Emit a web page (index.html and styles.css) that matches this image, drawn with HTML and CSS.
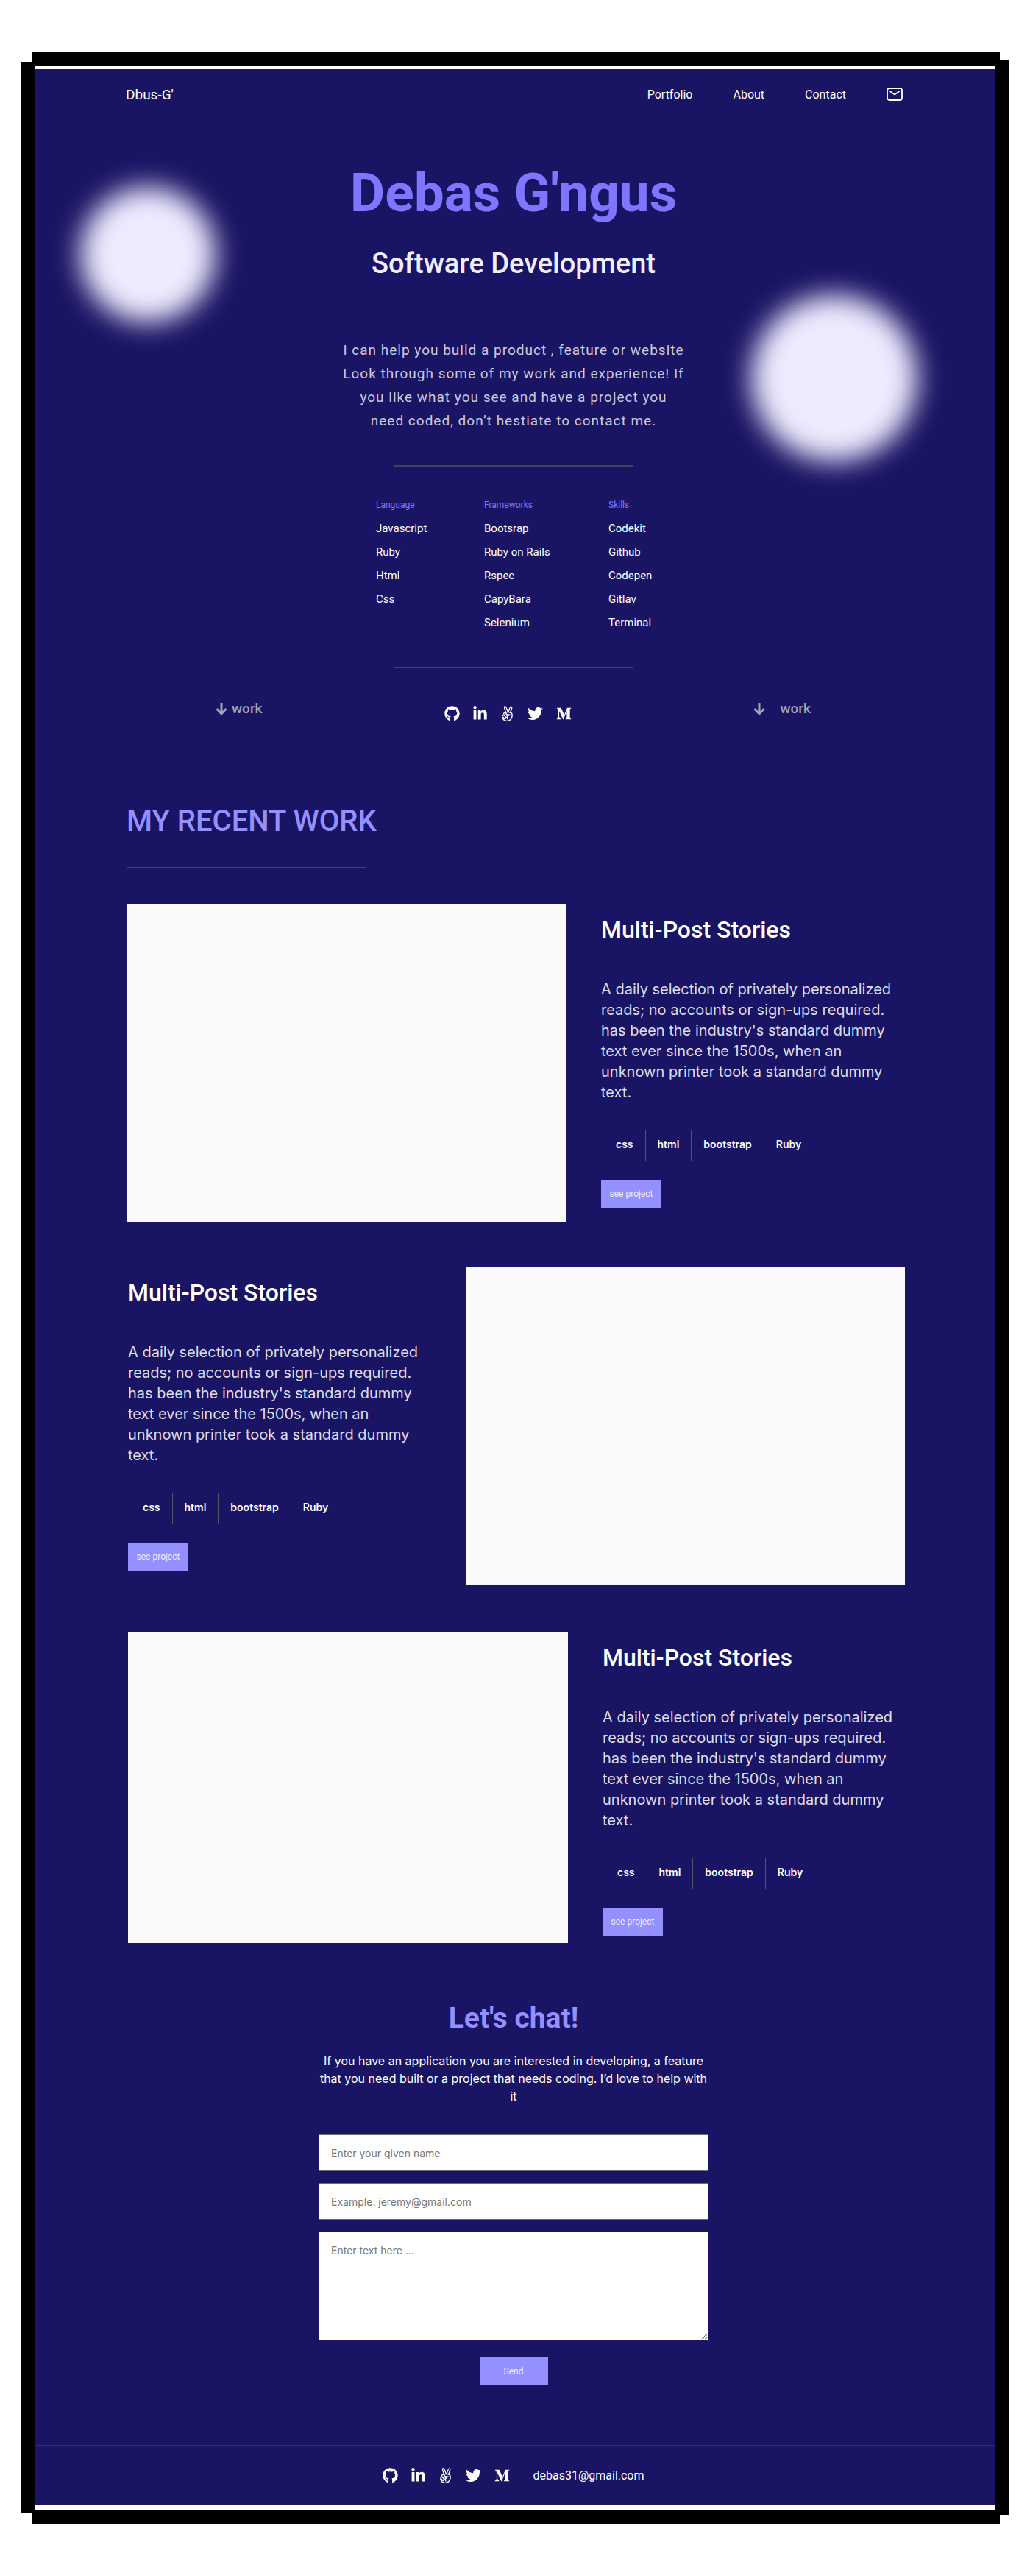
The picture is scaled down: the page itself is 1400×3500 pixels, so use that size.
FILE: index.html
```html
<!DOCTYPE html>
<html lang="en">
<head>
<meta charset="utf-8">
<meta name="viewport" content="width=device-width, initial-scale=1">
<title>Dbus-G' | Software Development</title>
<link rel="stylesheet" href="styles.css">
</head>
<body>
<svg class="sprite" aria-hidden="true">
  <symbol id="i-github" viewBox="0 0 496 512"><path d="M165.900 397.400c0 2-2.300 3.600-5.200 3.600-3.300.3-5.600-1.300-5.600-3.600 0-2 2.300-3.600 5.200-3.600 3-.3 5.600 1.300 5.600 3.600zM244.800 8C106.100 8 0 113.300 0 252c0 110.900 69.800 205.800 169.500 239.200 12.800 2.300 17.300-5.600 17.300-12.100 0-6.200-.3-40.400-.3-61.400 0 0-70 15-84.700-29.800 0 0-11.400-29.100-27.800-36.600 0 0-22.900-15.700 1.600-15.400 0 0 24.900 2 38.600 25.800 21.900 38.600 58.600 27.500 72.900 20.900 2.300-16 8.800-27.100 16-33.700-55.900-6.200-112.300-14.300-112.300-110.500 0-27.500 7.600-41.300 23.600-58.900-2.600-6.500-11.100-33.300 2.600-67.900 20.900-6.500 69 27 69 27 20-5.600 41.500-8.500 62.800-8.500s42.800 2.900 62.800 8.500c0 0 48.100-33.600 69-27 13.700 34.700 5.200 61.400 2.600 67.900 16 17.700 25.800 31.500 25.800 58.900 0 96.500-58.900 104.200-114.800 110.500 9.200 7.900 17 22.900 17 46.400 0 33.700-.3 75.400-.3 83.600 0 6.500 4.600 14.400 17.300 12.100C428.200 457.800 496 362.900 496 252 496 113.300 383.500 8 244.800 8z"/></symbol>
  <symbol id="i-linkedin" viewBox="0 0 448 512"><path d="M100.280 448H7.400V148.900h92.880zM53.790 108.100C24.090 108.100 0 83.500 0 53.800a53.790 53.790 0 0 1 107.580 0c0 29.700-24.100 54.300-53.790 54.300zM447.900 448h-92.680V302.400c0-34.700-.7-79.200-48.290-79.200-48.290 0-55.690 37.700-55.690 76.700V448h-92.780V148.900h89.080v40.800h1.300c12.400-23.500 42.690-48.300 87.880-48.300 94 0 111.280 61.900 111.280 142.300V448z"/></symbol>
  <symbol id="i-angellist" viewBox="0 0 448 512"><path d="M347.100 215.400c11.700-32.600 45.400-126.900 45.400-157.100 0-26.600-15.700-48.900-43.700-48.900-44.600 0-84.600 131.700-97.100 163.100C242 144 196.600 0 156.600 0c-31.100 0-45.700 22.900-45.700 51.700 0 35.300 34.200 126.800 46.600 162-6.300-2.300-13.100-4.300-20-4.300-23.400 0-48.300 29.100-48.300 52.600 0 8.900 4.900 21.400 8 29.700-36.900 10-51.100 34.600-51.100 71.700C46 435.600 114.400 512 210.600 512c118 0 191.400-88.600 191.400-202.900 0-43.100-6.900-82-54.900-93.700zM311.700 108c4-12.300 21.100-64.300 37.100-64.300 8.600 0 10.900 8.900 10.900 16 0 19.100-38.600 124.600-47.100 148l-34-6 33.100-93.700zM142.300 48.300c0-11.900 14.500-45.700 46.300 47.100l34.600 100.300c-15.600-1.300-27.700-3-35.400 1.400-10.900-28.800-45.500-119.700-45.500-148.800zM140 244c29.300 0 67.100 94.600 67.100 107.400 0 5.100-4.900 11.400-10.600 11.400-20.900 0-76.900-76.900-76.900-97.700.1-7.700 12.700-21.100 20.400-21.100zm184.300 186.300c-29.100 32-66.300 48.600-109.700 48.600-59.400 0-106.300-32.600-128.900-88.300-17.100-43.400 3.800-68.300 20.600-68.300 11.400 0 54.300 60.300 54.300 73.100 0 4.900-7.700 8.300-11.700 8.300-16.100 0-22.400-15.500-51.100-51.400-29.700 29.700 20.500 86.900 58.300 86.900 26.100 0 43.100-24.200 38-42 3.700 0 8.300.3 11.700-.6 1.100 27.100 9.100 59.400 41.700 61.700 0-.9 2-7.100 2-7.400 0-17.400-10.600-32.600-10.600-50.300 0-28.300 21.700-55.700 43.700-71.700 8-6 17.700-9.700 27.100-13.100 9.700-3.700 20-8 27.400-15.400-1.100-11.200-5.700-21.100-16.900-21.100-27.700 0-120.600 4-120.600-39.700 0-6.700.1-13.100 17.400-13.100 32.300 0 114.300 8 138.300 29.100 18.100 16.100 24.300 113.200-31 174.700zm-98.600-126c9.700 3.100 19.700 4 29.700 6-7.400 5.400-14 12-20.300 19.100-2.800-8.500-6.200-16.800-9.400-25.100z"/></symbol>
  <symbol id="i-twitter" viewBox="0 0 512 512"><path d="M459.370 151.716c.325 4.548.325 9.097.325 13.645 0 138.720-105.583 298.558-298.558 298.558-59.452 0-114.680-17.219-161.137-47.106 8.447.974 16.568 1.299 25.340 1.299 49.055 0 94.213-16.568 130.274-44.832-46.132-.975-84.792-31.188-98.112-72.772 6.498.974 12.995 1.624 19.818 1.624 9.421 0 18.843-1.300 27.614-3.573-48.081-9.747-84.143-51.980-84.143-102.985v-1.299c13.969 7.797 30.214 12.670 47.431 13.319-28.264-18.843-46.781-51.005-46.781-87.391 0-19.492 5.197-37.360 14.294-52.954 51.655 63.675 129.300 105.258 216.365 109.807-1.624-7.797-2.599-15.918-2.599-24.040 0-57.828 46.782-104.934 104.934-104.934 30.213 0 57.502 12.670 76.670 33.137 23.715-4.548 46.456-13.320 66.599-25.340-7.798 24.366-24.366 44.833-46.132 57.827 21.117-2.273 41.584-8.122 60.426-16.243-14.292 20.791-32.161 39.308-52.628 54.253z"/></symbol>
  <symbol id="i-medium" viewBox="0 0 512 512"><path d="M71.500 142.300c.6-5.900-1.700-11.800-6.100-15.800L20.300 72.100V64h140.200l108.400 237.700L364.200 64h133.700v8.100l-38.600 37c-3.300 2.500-5 6.700-4.300 10.800v272c-.7 4.100 1 8.300 4.300 10.800l37.700 37v8.100H307.300v-8.100l39.100-37.900c3.800-3.800 3.800-5 3.800-10.800V171.200L241.500 447.100h-14.700L100.400 171.200v184.900c-1.100 7.800 1.500 15.600 7 21.200l50.800 61.600v8.100h-144v-8L65 377.300c5.400-5.600 7.900-13.500 6.500-21.200V142.300z"/></symbol>
  <symbol id="i-down" viewBox="0 0 16 18"><path d="M8 1v15M1.500 9 8 15.800 14.500 9" fill="none" stroke="currentColor" stroke-width="3"/></symbol>
  <symbol id="i-mail" viewBox="0 0 22 18"><rect x="1" y="1" width="20" height="16" rx="3" fill="none" stroke="currentColor" stroke-width="1.800"/><path d="m4.500 5 6.500 4.500L17.500 5" fill="none" stroke="currentColor" stroke-width="1.800"/></symbol>
</svg>

<div class="frame">
  <div class="page">
    <header class="nav">
      <a class="brand" href="#top">Dbus-G'</a>
      <nav class="nav-links" aria-label="Main">
        <a href="#work">Portfolio</a>
        <a href="#about">About</a>
        <a href="#contact">Contact</a>
        <a href="#contact" aria-label="Email"><svg class="mail"><use href="#i-mail"/></svg></a>
      </nav>
    </header>

    <section class="hero" id="top">
      <h1>Debas G'ngus</h1>
      <h2>Software Development</h2>
      <p class="intro">I can help you build a product , feature or website Look through some of my work and experience! If you like what you see and have a project you need coded, don’t hestiate to contact me.</p>
      <hr class="rule">
      <div class="stack" id="about">
        <div><h3>Language</h3><ul><li>Javascript</li><li>Ruby</li><li>Html</li><li>Css</li></ul></div>
        <div><h3>Frameworks</h3><ul><li>Bootsrap</li><li>Ruby on Rails</li><li>Rspec</li><li>CapyBara</li><li>Selenium</li></ul></div>
        <div><h3>Skills</h3><ul><li>Codekit</li><li>Github</li><li>Codepen</li><li>Gitlav</li><li>Terminal</li></ul></div>
      </div>
      <hr class="rule">
      <div class="jump">
        <a class="jump-link" href="#work"><svg><use href="#i-down"/></svg>work</a>
        <div class="social">
          <a href="#github" aria-label="GitHub"><svg class="w-21"><use href="#i-github"/></svg></a>
          <a href="#linkedin" aria-label="LinkedIn"><svg class="w-19"><use href="#i-linkedin"/></svg></a>
          <a href="#angellist" aria-label="AngelList"><svg class="w-19"><use href="#i-angellist"/></svg></a>
          <a href="#twitter" aria-label="Twitter"><svg class="w-21"><use href="#i-twitter"/></svg></a>
          <a href="#medium" aria-label="Medium"><svg class="w-21"><use href="#i-medium"/></svg></a>
        </div>
        <a class="jump-link wide" href="#work"><svg><use href="#i-down"/></svg>work</a>
      </div>
    </section>

    <main class="work" id="work">
      <h2>MY RECENT WORK</h2>
      <hr class="rule">
      <article class="project">
        <div class="shot"></div>
        <div class="info">
          <h3>Multi-Post Stories</h3>
          <p>A daily selection of privately personalized reads; no accounts or sign-ups required. has been the industry's standard dummy text ever since the 1500s, when an unknown printer took a standard dummy text.</p>
          <ul class="tags"><li>css</li><li>html</li><li>bootstrap</li><li>Ruby</li></ul>
          <button class="btn" type="button">see project</button>
        </div>
      </article>
      <article class="project flip">
        <div class="shot"></div>
        <div class="info">
          <h3>Multi-Post Stories</h3>
          <p>A daily selection of privately personalized reads; no accounts or sign-ups required. has been the industry's standard dummy text ever since the 1500s, when an unknown printer took a standard dummy text.</p>
          <ul class="tags"><li>css</li><li>html</li><li>bootstrap</li><li>Ruby</li></ul>
          <button class="btn" type="button">see project</button>
        </div>
      </article>
      <article class="project last">
        <div class="shot"></div>
        <div class="info">
          <h3>Multi-Post Stories</h3>
          <p>A daily selection of privately personalized reads; no accounts or sign-ups required. has been the industry's standard dummy text ever since the 1500s, when an unknown printer took a standard dummy text.</p>
          <ul class="tags"><li>css</li><li>html</li><li>bootstrap</li><li>Ruby</li></ul>
          <button class="btn" type="button">see project</button>
        </div>
      </article>
    </main>

    <section class="contact" id="contact">
      <h2>Let's chat!</h2>
      <p>If you have an application you are interested in developing, a feature that you need built or a project that needs coding. I’d love to help with it</p>
      <form>
        <input type="text" name="name" aria-label="Your name" placeholder="Enter your given name">
        <input type="email" name="email" aria-label="Your email" placeholder="Example: jeremy@gmail.com">
        <textarea name="message" aria-label="Your message" placeholder="Enter text here ..."></textarea>
        <button class="btn send" type="submit">Send</button>
      </form>
    </section>

    <footer class="footer">
      <div class="social">
        <a href="#github" aria-label="GitHub"><svg class="w-21"><use href="#i-github"/></svg></a>
        <a href="#linkedin" aria-label="LinkedIn"><svg class="w-19"><use href="#i-linkedin"/></svg></a>
        <a href="#angellist" aria-label="AngelList"><svg class="w-19"><use href="#i-angellist"/></svg></a>
        <a href="#twitter" aria-label="Twitter"><svg class="w-21"><use href="#i-twitter"/></svg></a>
        <a href="#medium" aria-label="Medium"><svg class="w-21"><use href="#i-medium"/></svg></a>
      </div>
      <a class="email" href="mailto:debas31@gmail.com">debas31@gmail.com</a>
    </footer>
  </div>
</div>
</body>
</html>
```
FILE: styles.css
```css
:root {
  --navy: #1a1464;
  --violet: #9490ff;
  --line: #464356;
}

* { box-sizing: border-box; }

body {
  margin: 0;
  background: #fff;
  color: #fff;
  font-family: Roboto, "Liberation Sans", sans-serif;
}

h1, h2, h3, p, ul { margin: 0; padding: 0; }
ul { list-style: none; }
a { color: inherit; text-decoration: none; }
svg { display: block; fill: currentColor; }
.sprite { position: absolute; width: 0; height: 0; }

/* Four offset black bars: top, bottom, left, right */
.frame {
  margin: 70px 28px;
  padding: 24px 19px 25px;
  background:
    linear-gradient(#000, #000) 15px 0 / calc(100% - 28px) 19px no-repeat,
    linear-gradient(#000, #000) 15px 100% / calc(100% - 28px) 19px no-repeat,
    linear-gradient(#000, #000) 0 14px / 19px calc(100% - 28px) no-repeat,
    linear-gradient(#000, #000) 100% 11px / 19px calc(100% - 23px) no-repeat;
}

.page { background: var(--navy); overflow: hidden; }

.nav {
  display: flex;
  justify-content: space-between;
  align-items: center;
  height: 68px;
  padding: 0 126px 0 124px;
}
.brand { font-size: 19px; font-weight: 400; }
.nav-links { display: flex; align-items: center; gap: 55px; font-size: 16px; font-weight: 400; }
.mail { width: 22px; height: 18px; }

.hero {
  position: relative;
  display: flex;
  flex-direction: column;
  align-items: center;
  padding-right: 4px;
  text-align: center;
}
.hero::before, .hero::after {
  content: "";
  position: absolute;
  border-radius: 50%;
  background: #eeebff;
  filter: blur(18px);
}
.hero::before { left: 62px; top: 92px; width: 184px; height: 184px; }
.hero::after { right: 106px; top: 239px; width: 226px; height: 226px; }

h1 { margin-top: 56px; color: #7f76ff; font-size: 73px; line-height: 88px; font-weight: 700; }
.hero h2 { margin-top: 29px; color: #f0edff; font-size: 38px; line-height: 46px; font-weight: 500; }
.intro {
  width: 480px;
  padding: 0 6px;
  margin-top: 79px;
  color: #ccc9d8;
  font-size: 19px;
  line-height: 32px;
  letter-spacing: 1px;
}
.rule { width: 325px; height: 2px; margin: 0; border: 0; background: var(--line); }
.hero .rule { margin-top: 44px; }

.stack { display: grid; grid-template-columns: 147px 169px 58px; margin-top: 44px; text-align: left; }
.stack h3 { color: #7f76ff; font-size: 12px; line-height: 16px; font-weight: 400; }
.stack ul { margin-top: 8px; }
.stack li { font-size: 15px; line-height: 32px; font-weight: 400; white-space: nowrap; }

.jump {
  display: flex;
  justify-content: space-between;
  align-items: center;
  align-self: stretch;
  margin-top: 37px;
  padding: 0 247px 0 246px;
}
.jump-link { display: flex; align-items: center; gap: 6px; color: #a6a4b4; font-size: 19px; line-height: 22px; font-weight: 500; }
.jump-link svg { width: 16px; height: 18px; }
.jump-link.wide { gap: 20px; }

.social { display: flex; align-items: center; gap: 18px; padding-top: 14px; }
.social svg { height: 21px; }
.w-19 { width: 19px; }
.w-21 { width: 21px; }

.work { padding: 112px 123px 0 125px; }
.work h2 { margin-bottom: 38px; color: var(--violet); font-size: 40px; line-height: 48px; font-weight: 500; }
.project {
  display: grid;
  grid-template-columns: 598fr 413fr;
  gap: 47px;
  margin-top: 60px;
}
.work .rule + .project { margin-top: 48px; }
.project.flip { grid-template-columns: 414fr 597fr; }
.flip .shot { order: 1; }
.flip .info, .project.last { padding-left: 2px; }
.project.last { margin-top: 63px; margin-right: -2px; }
.shot { min-height: 433px; background: #fafafa; }
.last .shot { min-height: 423px; }
.info { padding-top: 16px; }
.info h3 { font-size: 32px; line-height: 38px; font-weight: 500; }
.info p {
  max-width: 402px;
  margin-top: 48px;
  color: #dedce8;
  font-family: Inter, sans-serif;
  font-size: 20px;
  line-height: 28px;
}
.tags { display: flex; margin-top: 38px; padding-left: 4px; }
.tags li {
  padding: 0 16px 3px;
  font-family: Inter, sans-serif;
  font-size: 14px;
  line-height: 38px;
  font-weight: 600;
}
.tags li + li { border-left: 1px solid #55535e; }

.btn {
  display: block;
  width: 82px;
  height: 38px;
  margin-top: 26px;
  padding: 0;
  border: 0;
  background: var(--violet);
  color: #efedff;
  font-family: Roboto, sans-serif;
  font-size: 12px;
}

.contact { width: 534px; margin: 0 auto; padding: 78px 4px 0 0; text-align: center; }
.contact h2 { color: var(--violet); font-size: 39px; line-height: 48px; font-weight: 700; }
.contact p { margin-top: 22px; font-family: Inter, sans-serif; font-size: 16px; line-height: 24px; }
form { display: flex; flex-direction: column; align-items: center; gap: 16px; margin-top: 40px; }
input, textarea {
  display: block;
  width: 100%;
  padding: 16px;
  border: 1px solid #6e6d76;
  border-radius: 1px;
  background: #fff;
  font-family: Inter, sans-serif;
  font-size: 14px;
}
input { height: 50px; }
textarea { height: 148px; }
::placeholder { color: #777; }
.send { width: 93px; margin-top: 7px; }

.footer {
  display: flex;
  justify-content: center;
  align-items: center;
  gap: 31px;
  height: 82px;
  margin-top: 81px;
  padding-right: 4px;
  border-top: 1px solid #353253;
}
.footer .social { padding: 0; }
.email { font-size: 16px; line-height: 24px; }
```
